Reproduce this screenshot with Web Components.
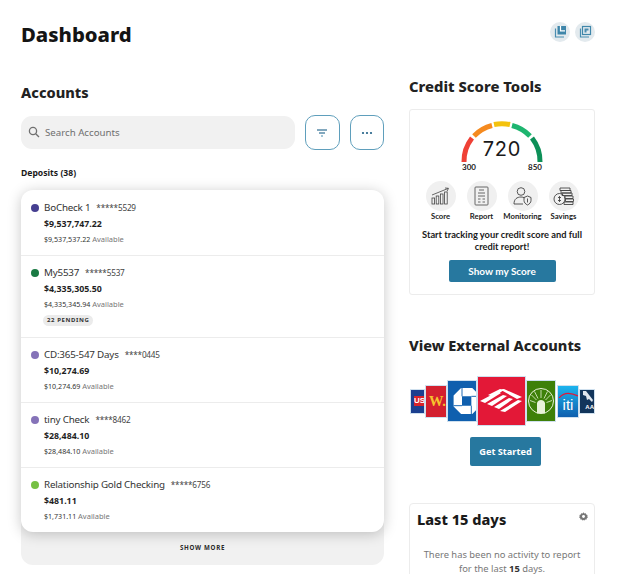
<!DOCTYPE html>
<html><head><meta charset="utf-8"><style>
html,body{margin:0;padding:0;background:#fff;overflow:hidden;height:574px}
body{font-family:"Noto Sans","Open Sans",sans-serif;color:#1a1a1a}
</style></head><body>
<dash-page></dash-page>
<template id="t-page"><style>
:host{display:block;box-sizing:border-box;width:618px;height:574px;overflow:hidden;padding:0 23px 0 21px}
header{display:flex;justify-content:space-between;align-items:center;height:35px;padding-top:17px}
h1{margin:0;font:800 20.300px/35px "Noto Sans",sans-serif;color:#141414}
.tools{display:flex;gap:5px;margin-top:-6px}
.rb{width:20px;height:20px;border-radius:50%;background:#e3eaee;display:flex;align-items:center;justify-content:center}
main{display:grid;grid-template-columns:363px 186px;column-gap:25px;margin-top:28px}
</style>
<header><h1>Dashboard</h1><div class="tools">
<div class="rb"><svg width="13" height="13" viewBox="0 0 13 13" fill="none"><rect x="3.500" y="1" width="8.500" height="8.500" fill="#3f86aa"/><path d="M1.500 3.500v8.500h8.500" stroke="#4a8db0" stroke-width="1.200"/><path d="M6.500 1v4.800h4.500" stroke="#fff" stroke-width="1.200"/></svg></div>
<div class="rb"><svg width="13" height="13" viewBox="0 0 13 13" fill="none"><rect x="3.500" y="1.500" width="8" height="8" stroke="#3f86aa" stroke-width="1.200"/><path d="M1.500 3.500v8.500h8.500" stroke="#4a8db0" stroke-width="1.200"/><path d="M5.500 7.500h2V5.500h2v-2h-4z" fill="#4a8db0"/></svg></div>
</div></header>
<main><accounts-col></accounts-col><side-col></side-col></main>
</template>

<template id="t-accounts"><style>
:host{display:block}
h2{margin:0;font:800 14.500px/22px "Noto Sans",sans-serif;color:#222;padding-top:1px}
.bar{display:flex;gap:10px;margin-top:12px;align-items:center}
.search{flex:none;width:274px;height:33px;border-radius:11px;background:#f1f1f1;display:flex;align-items:center;gap:5px;padding:0 0 1px 7px;box-sizing:border-box;font-size:9.700px;color:#6f6f6f}
.btn{width:35px;height:35px;box-sizing:border-box;border:1px solid #5f9fbc;border-radius:10px;display:flex;align-items:center;justify-content:center;background:#fff}
.dep{font:700 8.600px/12px "Noto Sans",sans-serif;margin-top:17px;color:#1a1a1a}
.list{position:relative;z-index:1;margin-top:11px;background:#fff;border-radius:12px;box-shadow:0 2px 14px rgba(0,0,0,.22);display:block}
.more{margin-top:-14px;height:47px;box-sizing:border-box;padding-top:14px;background:#f1f1f1;border-radius:0 0 12px 12px;display:flex;align-items:center;justify-content:center;font:700 6.200px/1 "Noto Sans",sans-serif;letter-spacing:.7px;color:#2a2a2a}
</style>
<h2>Accounts</h2>
<div class="bar">
<div class="search"><svg width="12" height="12" viewBox="0 0 12 12" fill="none" stroke="#707070" stroke-width="1.300"><circle cx="5" cy="5" r="3.600"/><path d="M7.700 7.700 11 11"/></svg><span>Search Accounts</span></div>
<div class="btn"><svg width="12" height="10" viewBox="0 0 12 10" stroke-width="1.200"><path d="M1 2h10" stroke="#2f6f93"/><path d="M3 5h6" stroke="#2f6f93"/><path d="M5 8h2" stroke="#4a8db0"/></svg></div>
<div class="btn"><svg width="12" height="4" viewBox="0 0 12 4" fill="#1f5f85"><circle cx="2" cy="2" r="1.100"/><circle cx="6" cy="2" r="1.100"/><circle cx="10" cy="2" r="1.100"/></svg></div>
</div>
<div class="dep">Deposits (38)</div>
<div class="list">
<acct-row first color="#463f91" name="BoCheck 1" num="*****5529" bal="$9,537,747.22" avail="$9,537,537.22"></acct-row>
<acct-row color="#1a7a43" name="My5537" num="*****5537" bal="$4,335,305.50" avail="$4,335,345.94" pending="22 PENDING"></acct-row>
<acct-row color="#8573b8" name="CD:365-547 Days" num="****0445" bal="$10,274.69" avail="$10,274.69"></acct-row>
<acct-row color="#8573b8" name="tiny Check" num="****8462" bal="$28,484.10" avail="$28,484.10"></acct-row>
<acct-row color="#76c043" name="Relationship Gold Checking" num="*****6756" bal="$481.11" avail="$1,731.11"></acct-row>
</div>
<div class="more">SHOW MORE</div>
</template>

<template id="t-row"><style>
:host{display:block;box-sizing:border-box;padding:9px 10px 0 23px;height:65px;border-top:1px solid #ececec;position:relative}
:host([first]){border-top:0;padding-top:10px}
:host([pending]){height:82px}
.dot{position:absolute;left:10px;top:13px;width:8px;height:8px;border-radius:50%}
:host([first]) .dot{top:14px}
.n{font:400 9.800px/15px "Noto Sans",sans-serif;letter-spacing:-.2px;color:#333;display:flex;gap:6px;align-items:baseline}
.num{font-size:8.200px;letter-spacing:-.2px;color:#444}
.b{font:700 8.800px/14px "Noto Sans",sans-serif;color:#1f1f1f;margin-top:2px}
.a{font:400 7.100px/11px "Noto Sans",sans-serif;color:#333;margin-top:3px}
.a span{color:#777;font-size:7.500px}
.pw{display:flex;margin-top:5px}
.p{margin-left:-1px;background:#ebebeb;border-radius:6px;padding:0 4px;font:700 6px/11px "Noto Sans",sans-serif;letter-spacing:.6px;color:#333}
</style><i class="dot"></i><div class="n"><span class="nm"></span><span class="num"></span></div><div class="b"></div><div class="a"><b style="font-weight:400" class="av"></b> <span>Available</span></div><div class="pw"></div>
</template>

<template id="t-side"><style>
:host{display:block;margin-top:-4px}
h2{margin:0;font:800 14.800px/20px "Noto Sans",sans-serif;color:#222}
.card{box-sizing:border-box;border:1px solid #ececec;border-radius:3px;background:#fff}
.cs{margin-top:13px;height:186px;padding:8px 7px 0;text-align:center;font-family:Lato,sans-serif}
.g{position:relative;height:44px;display:flex;justify-content:center}
.score{position:absolute;left:0;right:0;top:18px;font:400 20px/26px Inter,sans-serif;letter-spacing:.8px;color:#1a1a1a}
.ends{display:flex;justify-content:space-between;padding:0 45px;font:700 8px/9px Lato,sans-serif;color:#222;margin-top:1px}
.ic{display:grid;grid-template-columns:repeat(4,41px);justify-content:center;margin-top:9px;font:700 7.700px/10px Lato,sans-serif;color:#222}
.ic div{display:flex;flex-direction:column;align-items:center;gap:0;white-space:nowrap}
.ic i{width:30px;height:30px;border-radius:50%;background:#f0f0f0;display:flex;align-items:center;justify-content:center}
.t{font:700 9.300px/12px Lato,sans-serif;color:#1a1a1a;margin-top:8px}
.sb{display:block;margin:7px auto 0;width:107px;height:22px;border-radius:2px;background:#27789f;color:#fff;font:700 10px/22px Lato,sans-serif}
.ext{margin-top:40px;font-size:14.500px}
.lg{display:flex;align-items:center;justify-content:flex-start;margin-top:21px;height:50px}
.lg>*{flex:none;box-sizing:border-box;overflow:hidden;border:.5px solid #cfe0ee;display:flex;align-items:center;justify-content:center;position:relative}
.gs{display:block;margin:11px 0 0 61px;width:71px;height:29px;border-radius:2px;background:#27789f;color:#fff;font:700 9.200px/29px "Noto Sans",sans-serif;text-align:center}
.last{margin-top:37px;height:100px;border-radius:4px 4px 0 0;padding:5px 9px 0;position:relative;text-align:center;font:400 9.400px/14px "Noto Sans",sans-serif;color:#777}
.last h3{margin:0 0 19px -2px;text-align:left;font:800 14.500px/20px "Noto Sans",sans-serif;color:#1a1a1a}
.last svg{position:absolute;right:6px;top:8px}
.last b{color:#333}
</style>
<h2>Credit Score Tools</h2>
<div class="card cs">
<div class="g"><svg width="90" height="46" viewBox="0 0 90 46" fill="none" stroke-width="5"><path d="M7 44A38 38 0 0 1 15 20" stroke="#ef4136"/><path d="M17 18A38 38 0 0 1 35 7.500" stroke="#f58a1f"/><path d="M37 6.500A38 38 0 0 1 53 6.500" stroke="#f4c20d"/><path d="M55 7.500A38 38 0 0 1 73 18" stroke="#1eb56f"/><path d="M75 20A38 38 0 0 1 83 44" stroke="#0d9058"/></svg><div class="score">720</div></div>
<div class="ends"><span>300</span><span>850</span></div>
<div class="ic">
<div><i><svg width="20" height="18" viewBox="0 0 20 18" fill="none" stroke="#444" stroke-width=".8"><rect x="1" y="11" width="2.600" height="6"/><rect x="5.200" y="9" width="2.600" height="8"/><rect x="9.400" y="7" width="2.600" height="10"/><rect x="13.600" y="5" width="2.600" height="12"/><path d="M1 8 17 1.500M14 1l3.500.3-1.500 3"/></svg></i>Score</div>
<div><i><svg width="15" height="20" viewBox="0 0 15 20" fill="none" stroke="#444" stroke-width=".8"><rect x="1" y="1" width="13" height="18" rx=".8"/><path d="M5 4h5M4 7h7M4 10h7M4 13h2.500M8.500 13H11M4 16h2.500M8.500 16H11"/></svg></i>Report</div>
<div><i><svg width="20" height="20" viewBox="0 0 20 20" fill="none" stroke="#444" stroke-width=".9"><circle cx="8" cy="5.500" r="3.800"/><path d="M1 18c0-5 3-7 7-7 1.500 0 2.500.3 3.300.8M1 18h9"/><path d="M11 11.500l3.500-1.500 3.500 1.500v3c0 2-1.500 3.500-3.500 4.500-2-1-3.500-2.500-3.500-4.500z"/><path d="M14.500 12.500v4" /></svg></i>Monitoring</div>
<div><i><svg width="21" height="20" viewBox="0 0 21 20" fill="none" stroke="#444" stroke-width=".9"><circle cx="6.500" cy="13" r="5.500"/><path d="M6.500 10v6M5 11.500h3M5 14.500h3"/><path d="M7 2h10v2.500H7zM8 4.500h10V7H8zM9 7h10v2.500H9zM12 10h8v2.500h-8zM12.500 13h8v2.500h-8zM11 16h9v2.500h-9z"/></svg></i>Savings</div>
</div>
<div class="t">Start tracking your credit score and full credit report!</div>
<div class="sb">Show my Score</div>
</div>
<h2 class="ext">View External Accounts</h2>
<div class="lg">
<div style="width:15px;height:25px;background:#1b3f8f;color:#fff;font:800 8px/1 'Liberation Sans',sans-serif;z-index:1;margin-left:1px;justify-content:flex-start;padding-left:3px"><span style="background:#d8232a;padding:1px 0">US</span></div>
<div style="width:22px;height:33px;background:#d3202f;color:#f6c42d;font:700 14.500px/1 'Liberation Serif',serif;z-index:2;justify-content:flex-start;padding-left:3px;white-space:nowrap">W.</div>
<div style="width:30px;height:42px;background:#0f5fae;z-index:3"><svg width="30" height="42" viewBox="0 0 30 42"><path fill-rule="evenodd" fill="#fff" d="M14 7h12l8 8v12l-8 8H14l-8-8V15zM15 16v10h10V16z"/><path d="M15 16V7M25 16h9M25 26v9M15 26H6" stroke="#0f5fae" stroke-width="1"/></svg></div>
<div style="width:49px;height:50px;background:#e31837;z-index:4"><svg width="43" height="26" viewBox="0 0 43 26" fill="#fff"><path d="M0 13 17 4l4 1L5 15zM7 16 23 7l4 1-15 10zM14 19 29 10l4 1-14 10zM8 7 20 1l4 1L13 9zM24 1l18 8-5 2-16-9zM20 23 38 12l4 1-17 11z"/></svg></div>
<div style="width:30px;height:42px;background:#3e8009;z-index:3"><svg width="28" height="28" viewBox="0 0 28 28" fill="none" stroke="#e8f2d8"><circle cx="14" cy="14" r="12.500" stroke-width="1"/><path d="M10 26.500V16c1-4 7-4 8 0v10.500z" fill="#e8f2d8" stroke="none"/><path stroke-width=".8" d="M14 11V3M11 11.500 7.500 4.500M17 11.500l3.500-7M9.500 13 4.500 8M18.500 13l5-5M8.500 15.500l-5.500-2M19.500 15.500l5.500-2"/></svg></div>
<div style="width:22px;height:33px;background:linear-gradient(#1cb4ee,#0f5fae);color:#fff;font:400 15px/1 'Liberation Sans',sans-serif;z-index:2;padding-top:7px;margin-left:1px">iti<svg style="position:absolute;left:0;top:6px" width="21" height="6" viewBox="0 0 21 6" fill="none"><path d="M1 6C5 1 12 0 20 4" stroke="#e31837" stroke-width="1.200"/></svg></div>
<div style="width:16px;height:25px;background:#12355b;color:#fff;font:700 6px/1 'Liberation Sans',sans-serif;z-index:1;padding-top:12px;justify-content:flex-end">AA<svg style="position:absolute;left:2px;top:1px" width="12" height="12" viewBox="0 0 12 12" fill="#dfe6ee"><path d="M1 0h3l7 9-1 2-3-3-2 1-1-4-3-1z"/></svg></div>
</div>
<div class="gs">Get Started</div>
<div class="card last"><svg width="9" height="9" viewBox="0 0 10 10" fill="#777"><path d="M5 .4 6 1.600l1.500-.3.500 1.500 1.500.5L9.200 4.800 10 6 8.700 6.700 8.500 8.300 7 8.200 6 9.500 5 8.800 3.800 9.500 3 8.200 1.500 8.300 1.300 6.700 0 6 .8 4.800.5 3.300 2 2.800l.5-1.500L4 1.600z"/><circle cx="5" cy="5" r="1.600" fill="#fff"/></svg>
<h3>Last 15 days</h3>There has been no activity to report for the last <b>15</b> days.</div>
</template>
<script>
const mk=(id)=>class extends HTMLElement{constructor(){super();this.attachShadow({mode:"open"}).appendChild(document.getElementById(id).content.cloneNode(true))}};
customElements.define("dash-page",mk("t-page"));
customElements.define("accounts-col",mk("t-accounts"));
customElements.define("side-col",mk("t-side"));
class AcctRow extends mk("t-row"){connectedCallback(){const s=this.shadowRoot,g=a=>this.getAttribute(a);
s.querySelector(".dot").style.background=g("color");
s.querySelector(".nm").textContent=g("name");s.querySelector(".num").textContent=g("num");
s.querySelector(".b").textContent=g("bal");s.querySelector(".av").textContent=g("avail");
if(g("pending")){const p=document.createElement("span");p.className="p";p.textContent=g("pending");s.querySelector(".pw").appendChild(p)}}}
customElements.define("acct-row",AcctRow);
</script>
</body></html>
